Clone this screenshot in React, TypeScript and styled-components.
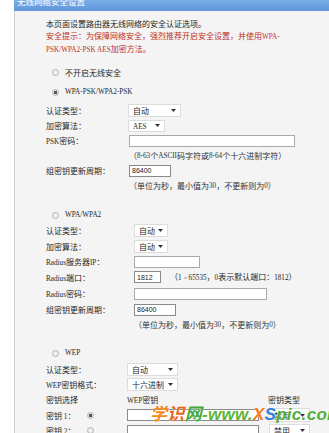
import React from "react";
import styled, { createGlobalStyle } from "styled-components";

const Global = createGlobalStyle`
  html, body { margin: 0; padding: 0; background: #fff; }
  body {
    width: 329px; height: 433px; overflow: hidden;
    font-family: "Noto Sans CJK SC", "Noto Sans", sans-serif;
  }
`;

const Page = styled.div`
  position: relative;
  display: flex;
  width: 329px;
  height: 433px;
  overflow: hidden;
  background: #fff;
`;

const Gutter = styled.div`
  width: 14px;
  flex: none;
  background: #fff;
`;

const Panel = styled.div`
  flex: 1;
  display: flex;
  flex-direction: column;
  background: #f4f4f4;
  border-left: 1px solid #cfcfcf;
  color: #262626;
  font-size: 8px;
`;

const TitleBar = styled.div`
  height: 11px;
  flex: none;
  overflow: hidden;
  background: linear-gradient(#7aaee8, #5f96da);
  margin-left: -1px;
  padding-left: 3px;
`;

const TitleText = styled.div`
  color: #fff;
  font-size: 8.5px;
  line-height: 9px;
  margin-top: -3px;
`;

const Intro = styled.div`
  margin-top: 7px;
  padding-left: 31px;
  line-height: 12px;
  white-space: nowrap;
`;

const RedText = styled.div`
  color: #bf2f2a;
`;

const Latin = styled.span<{ $size?: number }>`
  font-family: "Liberation Serif", serif;
  font-size: ${(p) => p.$size ?? 7.2}px;
`;

const Digits = styled.span`
  font-family: "Liberation Sans", sans-serif;
  font-size: 7px;
`;

const Section = styled.div<{ $mt: number }>`
  margin-top: ${(p) => p.$mt}px;
  padding-left: 31px;
  display: flex;
  flex-direction: column;
`;

const RadioRow = styled.div<{ $h: number }>`
  height: ${(p) => p.$h}px;
  display: flex;
  align-items: center;
  gap: 6px;
  padding-left: 6px;
  white-space: nowrap;
`;

const Radio = styled.span<{ $on?: boolean }>`
  width: 7px;
  height: 7px;
  box-sizing: border-box;
  border-radius: 50%;
  border: 1px solid #b4b4b4;
  background: radial-gradient(circle, ${(p) => (p.$on ? "#555 0 1.6px, #e6e6e6 2px" : "#f8f8f8 0, #e0e0e0 100%")});
  flex: none;
`;

const Row = styled.div<{ $h: number; $lw: number }>`
  height: ${(p) => p.$h}px;
  display: grid;
  grid-template-columns: ${(p) => p.$lw}px auto;
  align-items: center;
  white-space: nowrap;
`;

const Label = styled.span`
  color: #262626;
`;

const Control = styled.div`
  display: flex;
  align-items: center;
  gap: 9px;
`;

const SelectBox = styled.div<{ $w: number; $h?: number }>`
  box-sizing: border-box;
  width: ${(p) => p.$w}px;
  height: ${(p) => p.$h ?? 13}px;
  display: flex;
  align-items: center;
  justify-content: space-between;
  padding: 0 4px 0 4px;
  background: #fff;
  border: 1px solid #dcdcdc;
  color: #1e1e1e;
`;

const Arrow = () => (
  <svg width="5" height="3" viewBox="0 0 5 3">
    <path d="M0 0H5L2.5 3Z" fill="#333" />
  </svg>
);

const Select = ({ w, h, children }: { w: number; h?: number; children: React.ReactNode }) => (
  <SelectBox $w={w} $h={h}>
    <span>{children}</span>
    <Arrow />
  </SelectBox>
);

const TextInput = styled.div<{ $w: number; $dark?: boolean }>`
  box-sizing: border-box;
  width: ${(p) => p.$w}px;
  height: 12px;
  background: #fff;
  border: 1px solid ${(p) => (p.$dark ? "#8a8a8a" : "#a9a9a9")};
  padding-left: 2px;
  display: flex;
  align-items: center;
  color: #222;
`;

const Hint = styled.div<{ $h: number; $pl: number }>`
  height: ${(p) => p.$h}px;
  display: flex;
  align-items: center;
  padding-left: ${(p) => p.$pl}px;
  color: #333;
  white-space: nowrap;
`;

const KeyRow = styled.div<{ $h: number }>`
  height: ${(p) => p.$h}px;
  display: grid;
  grid-template-columns: 41px 40px 142px auto;
  align-items: center;
  white-space: nowrap;
`;

const HeaderRow = styled.div<{ $h: number }>`
  height: ${(p) => p.$h}px;
  display: grid;
  grid-template-columns: 81px 141px auto;
  align-items: center;
  white-space: nowrap;
`;

const Watermark = styled.div`
  position: absolute;
  left: 150px;
  top: 402px;
  font-family: "Liberation Sans", "Noto Sans CJK SC", sans-serif;
  font-weight: bold;
  font-style: italic;
  font-size: 17px;
  line-height: 26px;
  white-space: nowrap;
  letter-spacing: 0.3px;
  text-shadow: 0 0 1px #fff;
`;

const Mark = styled.span<{ $c: string }>`
  color: ${(p) => p.$c};
`;

export default function App() {
  return (
    <Page>
      <Global />
      <Gutter />
      <Panel>
        <TitleBar>
          <TitleText>无线网络安全设置</TitleText>
        </TitleBar>
        <Intro>
          <div>本页面设置路由器无线网络的安全认证选项。</div>
          <RedText>
            安全提示：为保障网络安全，强烈推荐开启安全设置，并使用<Latin>WPA-</Latin>
          </RedText>
          <RedText>
            <Latin>PSK/WPA2-PSK AES</Latin>加密方法。
          </RedText>
        </Intro>

        <Section $mt={9}>
          <RadioRow $h={14}>
            <Radio />
            <span>不开启无线安全</span>
          </RadioRow>
          <RadioRow $h={14} style={{ marginTop: 6 }}>
            <Radio $on />
            <Latin>WPA-PSK/WPA2-PSK</Latin>
          </RadioRow>
          <Row $h={15} $lw={82} style={{ marginTop: 4 }}>
            <Label>认证类型：</Label>
            <Control>
              <Select w={53}>自动</Select>
            </Control>
          </Row>
          <Row $h={15} $lw={82}>
            <Label>加密算法：</Label>
            <Control>
              <Select w={37} h={12}>
                <Latin>AES</Latin>
              </Select>
            </Control>
          </Row>
          <Row $h={15} $lw={82}>
            <Label>
              <Latin>PSK</Latin>密码：
            </Label>
            <Control>
              <TextInput $w={166} style={{ marginLeft: 1 }} />
            </Control>
          </Row>
          <Hint $h={15} $pl={83}>
            （<Latin>8-63</Latin>个<Latin>ASCII</Latin>码字符或<Latin>8-64</Latin>个十六进制字符）
          </Hint>
          <Row $h={15} $lw={82}>
            <Label>组密钥更新周期：</Label>
            <Control>
              <TextInput $w={42} $dark style={{ marginLeft: 1 }}>
                <Digits>86400</Digits>
              </TextInput>
            </Control>
          </Row>
          <Hint $h={15} $pl={83}>
            （单位为秒，最小值为<Latin>30</Latin>，不更新则为<Latin>0</Latin>）
          </Hint>
        </Section>

        <Section $mt={15}>
          <RadioRow $h={14}>
            <Radio />
            <Latin>WPA/WPA2</Latin>
          </RadioRow>
          <Row $h={16} $lw={88}>
            <Label>认证类型：</Label>
            <Control>
              <Select w={34}>自动</Select>
            </Control>
          </Row>
          <Row $h={16} $lw={88}>
            <Label>加密算法：</Label>
            <Control>
              <Select w={34}>自动</Select>
            </Control>
          </Row>
          <Row $h={15} $lw={88}>
            <Label>
              <Latin>Radius</Latin>服务器<Latin>IP</Latin>：
            </Label>
            <Control>
              <TextInput $w={66} />
            </Control>
          </Row>
          <Row $h={16} $lw={88}>
            <Label>
              <Latin>Radius</Latin>端口：
            </Label>
            <Control>
              <TextInput $w={27} $dark>
                <Digits>1812</Digits>
              </TextInput>
              <span>
                （<Latin>1－65535</Latin>，<Latin>0</Latin>表示默认端口：<Latin>1812</Latin>）
              </span>
            </Control>
          </Row>
          <Row $h={17} $lw={88}>
            <Label>
              <Latin>Radius</Latin>密码：
            </Label>
            <Control>
              <TextInput $w={133} />
            </Control>
          </Row>
          <Row $h={15} $lw={88}>
            <Label>组密钥更新周期：</Label>
            <Control>
              <TextInput $w={42} $dark>
                <Digits>86400</Digits>
              </TextInput>
            </Control>
          </Row>
          <Hint $h={15} $pl={88}>
            （单位为秒，最小值为<Latin>30</Latin>，不更新则为<Latin>0</Latin>）
          </Hint>
        </Section>

        <Section $mt={14}>
          <RadioRow $h={14}>
            <Radio />
            <Latin>WEP</Latin>
          </RadioRow>
          <Row $h={15} $lw={81} style={{ marginTop: 2 }}>
            <Label>认证类型：</Label>
            <Control>
              <Select w={51}>自动</Select>
            </Control>
          </Row>
          <Row $h={15} $lw={81}>
            <Label>
              <Latin>WEP</Latin>密钥格式：
            </Label>
            <Control>
              <Select w={51}>十六进制</Select>
            </Control>
          </Row>
          <HeaderRow $h={15}>
            <Label>密钥选择</Label>
            <Label>
              <Latin>WEP</Latin>密钥
            </Label>
            <Label>密钥类型</Label>
          </HeaderRow>
          <KeyRow $h={16}>
            <Label>
              密钥 <Latin>1</Latin>：
            </Label>
            <Radio $on />
            <TextInput $w={132} $dark />
            <Select w={41} h={14}>
              禁用
            </Select>
          </KeyRow>
          <KeyRow $h={15}>
            <Label>
              密钥 <Latin>2</Latin>：
            </Label>
            <Radio />
            <TextInput $w={132} $dark />
            <Select w={41} h={14}>
              禁用
            </Select>
          </KeyRow>
        </Section>
      </Panel>
      <Watermark>
        <Mark $c="#f08a1a">学</Mark>
        <Mark $c="#e8661c">识</Mark>
        <Mark $c="#46a83c">网</Mark>
        <Mark $c="#5db53a">-www.</Mark>
        <Mark $c="#f07c1c">X</Mark>
        <Mark $c="#2f7fd4">S</Mark>
        <Mark $c="#52ad3c">pic.com</Mark>
      </Watermark>
    </Page>
  );
}
